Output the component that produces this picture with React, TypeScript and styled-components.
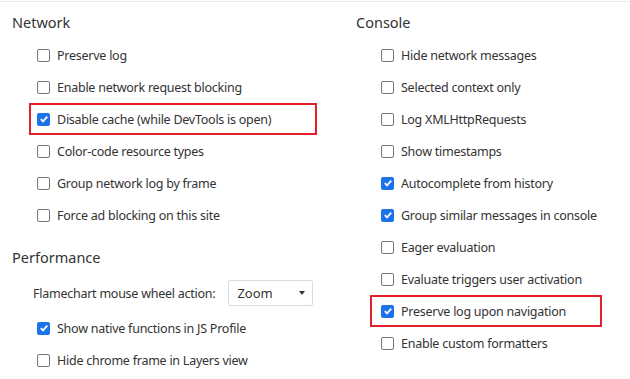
import React from "react";
import styled, { createGlobalStyle } from "styled-components";

const GlobalStyle = createGlobalStyle`
  body {
    margin: 0;
    background: #ffffff;
    font-family: "Noto Sans", "Open Sans", sans-serif;
    color: #303030;
  }
`;

const Page = styled.div`
  width: 630px;
  height: 378px;
  margin-top: 1px;
  border-top: 1px solid #ececec;
  display: grid;
  grid-template-columns: 344px 1fr;
  padding-left: 12px;
  box-sizing: border-box;
  overflow: hidden;
`;

const Column = styled.div`
  display: flex;
  flex-direction: column;
  padding-top: 4px;
`;

const Title = styled.div<{ $gap?: number }>`
  height: 33px;
  line-height: 33px;
  font-size: 14.5px;
  color: #333333;
  margin-top: ${(p) => p.$gap ?? 0}px;
`;

// highlighted rows get a red frame; $left/$width place the frame
const Row = styled.label<{ $left?: number; $width?: number }>`
  display: flex;
  align-items: center;
  gap: 7px;
  height: 32px;
  box-sizing: border-box;
  font-size: 12.5px;
  letter-spacing: -0.25px;
  color: #333333;
  margin-left: ${(p) => p.$left ?? 25}px;
  width: ${(p) => (p.$width ? `${p.$width}px` : "auto")};
  border: ${(p) => (p.$width ? "2px solid #e3202a" : "none")};
  padding-left: ${(p) => (p.$width ? 25 - (p.$left ?? 25) - 2 : 0)}px;
`;

const Box = styled.span<{ $on: boolean }>`
  width: 13px;
  height: 13px;
  box-sizing: border-box;
  border-radius: 2px;
  flex: none;
  border: ${(p) => (p.$on ? "none" : "1px solid #767676")};
  background: ${(p) => (p.$on ? "#1a73e8" : "#ffffff")};
  display: flex;
  align-items: center;
  justify-content: center;
`;

const SelectRow = styled.div`
  display: flex;
  align-items: center;
  height: 38px;
  margin-left: 21px;
  font-size: 12.5px;
  letter-spacing: -0.25px;
  color: #333333;
`;

const Select = styled.div`
  margin-left: 13px;
  width: 85px;
  height: 26px;
  box-sizing: border-box;
  border: 1px solid #dadce0;
  border-radius: 2px;
  display: flex;
  align-items: center;
  justify-content: space-between;
  padding: 0 7px 0 8px;
  font-size: 13px;
  letter-spacing: 0;
`;

const Caret = styled.span`
  width: 0;
  height: 0;
  border-left: 3px solid transparent;
  border-right: 3px solid transparent;
  border-top: 4px solid #333333;
`;

type Item = { text: string; on?: boolean; box?: { left: number; width: number } };

const Check = ({ text, on = false, box }: Item) => (
  <Row $left={box?.left} $width={box?.width}>
    <Box $on={on}>
      {on && (
        <svg width="10" height="10" viewBox="0 0 10 10">
          <path d="M1.8 5.2 L4 7.4 L8.3 2.6" fill="none" stroke="#fff" strokeWidth="1.8" />
        </svg>
      )}
    </Box>
    {text}
  </Row>
);

const network: Item[] = [
  { text: "Preserve log" },
  { text: "Enable network request blocking" },
  { text: "Disable cache (while DevTools is open)", on: true, box: { left: 17, width: 288 } },
  { text: "Color-code resource types" },
  { text: "Group network log by frame" },
  { text: "Force ad blocking on this site" },
];

const consoleItems: Item[] = [
  { text: "Hide network messages" },
  { text: "Selected context only" },
  { text: "Log XMLHttpRequests" },
  { text: "Show timestamps" },
  { text: "Autocomplete from history", on: true },
  { text: "Group similar messages in console", on: true },
  { text: "Eager evaluation" },
  { text: "Evaluate triggers user activation" },
  { text: "Preserve log upon navigation", on: true, box: { left: 14, width: 232 } },
  { text: "Enable custom formatters" },
];

const App = (): React.ReactElement => (
  <>
    <GlobalStyle />
    <Page>
      <Column>
        <Title>Network</Title>
        {network.map((item) => (
          <Check key={item.text} {...item} />
        ))}
        <Title $gap={10}>Performance</Title>
        <SelectRow>
          Flamechart mouse wheel action:
          <Select>
            Zoom
            <Caret />
          </Select>
        </SelectRow>
        <Check text="Show native functions in JS Profile" on />
        <Check text="Hide chrome frame in Layers view" />
      </Column>
      <Column>
        <Title>Console</Title>
        {consoleItems.map((item) => (
          <Check key={item.text} {...item} />
        ))}
      </Column>
    </Page>
  </>
);

export default App;
